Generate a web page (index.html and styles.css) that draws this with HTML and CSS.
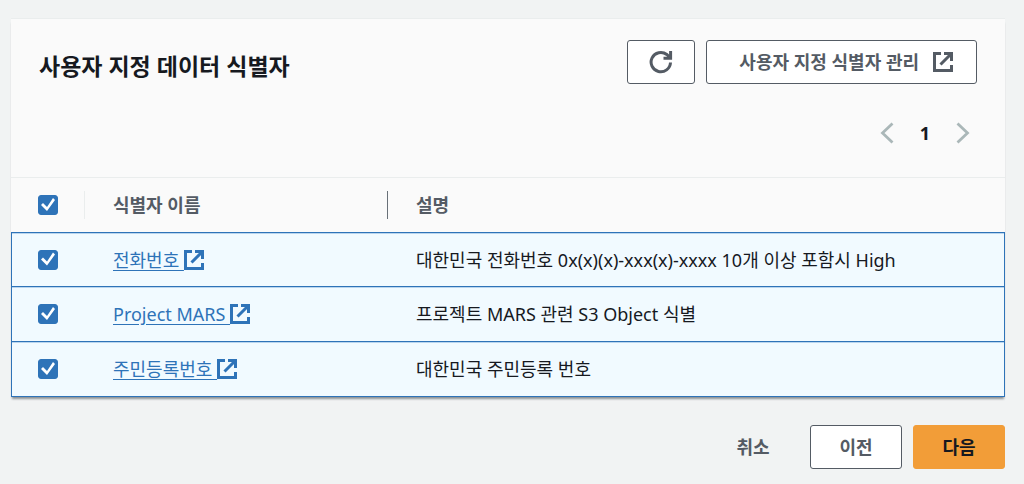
FILE: index.html
```
<!DOCTYPE html>
<html lang="ko">
<head>
<meta charset="utf-8">
<meta name="viewport" content="width=device-width, initial-scale=1">
<title>사용자 지정 데이터 식별자</title>
<link rel="stylesheet" href="styles.css">
</head>
<body>
<svg class="sprite" aria-hidden="true">
  <symbol id="external" viewBox="0 0 20 20">
    <path d="M8 1.500H1.500v17h17V13M11 1.500h7.500V9M18 2 7.500 12.500" fill="none" stroke="currentColor" stroke-width="3"/>
  </symbol>
</svg>
<main class="page">
  <section class="panel">
    <header class="panel-header">
      <div class="title-row">
        <h2 class="title">사용자 지정 데이터 식별자</h2>
        <div class="actions">
          <button class="button refresh" type="button" aria-label="새로 고침">
            <svg class="icon-refresh" viewBox="0 0 24 24" aria-hidden="true"><path d="M21.500 12.500A9.700 9.700 0 1 1 17.800 4.500L21 7.500M21.600 1v7.200H14.500" fill="none" stroke="currentColor" stroke-width="3"/></svg>
          </button>
          <button class="button manage" type="button">사용자 지정 식별자 관리
            <svg class="icon" aria-hidden="true"><use href="#external"/></svg>
          </button>
        </div>
      </div>
      <nav class="pagination" aria-label="페이지">
        <button class="page-arrow" type="button" aria-label="이전 페이지"><svg class="chevron" viewBox="0 0 14 22"><path d="M12.500 1.500 2.500 11l10 9.500" fill="none" stroke="currentColor" stroke-width="2.800"/></svg></button>
        <button class="page-number" type="button" aria-current="page">1</button>
        <button class="page-arrow" type="button" aria-label="다음 페이지"><svg class="chevron" viewBox="0 0 14 22"><path d="m1.500 1.500 10 9.500-10 9.500" fill="none" stroke="currentColor" stroke-width="2.800"/></svg></button>
      </nav>
    </header>
    <table class="table">
      <thead>
        <tr>
          <th class="select-col"><div class="head-cell"><input class="check" type="checkbox" aria-label="모두 선택" checked></div></th>
          <th class="name-col" scope="col"><div class="head-cell">식별자 이름</div></th>
          <th scope="col"><div class="head-cell">설명</div></th>
        </tr>
      </thead>
      <tbody>
        <tr>
          <td><input class="check" type="checkbox" aria-label="전화번호" checked></td>
          <td><a class="link" href="#phone">전화번호 <svg class="icon" aria-hidden="true"><use href="#external"/></svg></a></td>
          <td>대한민국 전화번호 0x(x)(x)-xxx(x)-xxxx 10개 이상 포함시 High</td>
        </tr>
        <tr>
          <td><input class="check" type="checkbox" aria-label="Project MARS" checked></td>
          <td><a class="link" href="#mars">Project MARS <svg class="icon" aria-hidden="true"><use href="#external"/></svg></a></td>
          <td>프로젝트 MARS 관련 S3 Object 식별</td>
        </tr>
        <tr>
          <td><input class="check" type="checkbox" aria-label="주민등록번호" checked></td>
          <td><a class="link" href="#rrn">주민등록번호 <svg class="icon" aria-hidden="true"><use href="#external"/></svg></a></td>
          <td>대한민국 주민등록 번호</td>
        </tr>
      </tbody>
    </table>
  </section>
  <footer class="footer">
    <button class="button plain" type="button">취소</button>
    <button class="button" type="button">이전</button>
    <button class="button primary" type="button">다음</button>
  </footer>
</main>
</body>
</html>
```

FILE: styles.css
```
* {
  box-sizing: border-box;
}

body {
  margin: 0;
  background: #f1f3f3;
  color: #16191f;
  font: 18px/28px "Noto Sans", "Noto Sans CJK KR", sans-serif;
}

.sprite {
  position: absolute;
  width: 0;
  height: 0;
}

.page {
  padding: 19px 19px 15px 11px;
}

.panel {
  background: #fafafa;
  box-shadow: 0 -1px 0 #eaeded, 0 3px 2px -1px #8c9196;
}

.panel-header {
  padding: 21px 28px 30px;
}

.title-row,
.actions,
.pagination,
.footer {
  display: flex;
}

.title-row {
  justify-content: space-between;
  align-items: flex-start;
}

.title {
  margin: 8px 0 0;
  font-size: 23px;
  line-height: 36px;
  font-weight: 700;
}

.actions {
  gap: 11px;
}

.button {
  display: inline-flex;
  align-items: center;
  justify-content: center;
  min-width: 92px;
  height: 44px;
  padding: 0 28px;
  border: 1px solid #545b64;
  border-radius: 3px;
  background: #fff;
  color: #545b64;
  font: inherit;
  font-weight: 700;
}

.refresh {
  min-width: 0;
  padding: 0 21px;
}

.manage {
  gap: 14px;
  padding: 0 23px 0 32px;
}

.plain {
  border-color: transparent;
  background: transparent;
}

.primary {
  border-color: #f29d38;
  background: #f29d38;
  color: #16191f;
}

.icon {
  width: 20px;
  height: 20px;
}

.icon-refresh {
  width: 24px;
  height: 24px;
}

.pagination {
  justify-content: flex-end;
  align-items: center;
  gap: 26px;
  margin-top: 35px;
  padding-right: 7px;
}

.page-arrow,
.page-number {
  display: flex;
  padding: 0;
  border: 0;
  background: none;
  font: inherit;
}

.page-arrow {
  color: #aab7b8;
}

.page-number {
  color: #16191f;
  font-weight: 700;
}

.chevron {
  width: 14px;
  height: 22px;
}

.table {
  width: 100%;
  border-collapse: separate;
  border-spacing: 0;
  table-layout: fixed;
}

.select-col {
  width: 74px;
}

.name-col {
  width: 303px;
}

.table th {
  height: 55px;
  padding: 0;
  border-top: 1px solid #eaeded;
  color: #545b64;
  font-weight: 700;
  text-align: left;
}

.head-cell {
  display: flex;
  align-items: center;
  height: 28px;
  padding-left: 28px;
  border-right: 1px solid #eaeded;
}

.select-col .head-cell {
  padding-left: 27px;
}

.name-col .head-cell {
  border-color: #687078;
}

th:last-child .head-cell {
  border: 0;
}

.table td {
  height: 55px;
  padding: 0 0 0 28px;
  border-bottom: 1px solid #2e73b8;
  background: #f1faff;
  box-shadow: inset 0 1px 0 #b9d5ee;
}

.table td:first-child {
  padding-left: 26px;
  border-left: 1px solid #2e73b8;
}

.table td:last-child {
  border-right: 1px solid #2e73b8;
}

.table tbody tr:first-child td {
  border-top: 1px solid #2e73b8;
}

.check {
  display: block;
  width: 20px;
  height: 20px;
  margin: 0;
  border-radius: 3px;
  appearance: none;
  background: #fff;
  border: 1px solid #2e73b8;
}

.check:checked {
  background: #2e73b8;
}

.check:checked::before {
  content: "";
  display: block;
  width: 18px;
  height: 18px;
  background: #fff;
  clip-path: polygon(2px 9px, 4px 7px, 8px 11px, 14px 2px, 16px 4px, 8px 15px);
}

.link {
  color: #2e73b8;
  text-decoration: underline;
  text-underline-offset: 3px;
}

.link .icon {
  vertical-align: -3px;
}

.footer {
  justify-content: flex-end;
  gap: 11px;
  margin-top: 28px;
}
```
